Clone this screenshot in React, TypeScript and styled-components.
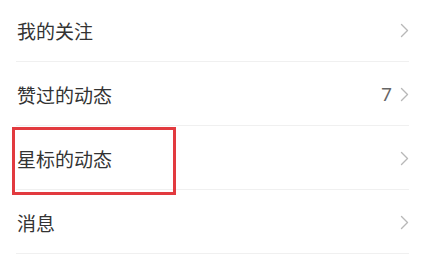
import styled, { createGlobalStyle } from "styled-components";

const GlobalStyle = createGlobalStyle`
  html, body {
    margin: 0;
    padding: 0;
    background: #ffffff;
  }
  body {
    font-family: "Noto Sans CJK SC", "Noto Sans", sans-serif;
    overflow: hidden;
  }
`;

const List = styled.div`
  position: relative;
  margin-top: -2px;
  width: 425px;
  background: #fff;
`;

const Row = styled.div`
  display: flex;
  align-items: center;
  height: 64px;
  margin-left: 16px;
  margin-right: 16px;
  padding-left: 1px;
  padding-top: 2px;
  box-sizing: border-box;
  border-bottom: 1px solid #f0f0f0;
`;

const Label = styled.span`
  flex: 1;
  font-size: 19px;
  color: #333333;
  line-height: 1;
`;

const Count = styled.span`
  font-size: 19px;
  color: #666666;
  margin-right: 8px;
  font-family: "Roboto", "Noto Sans", sans-serif;
  line-height: 1;
`;

const Chevron = styled.svg`
  width: 9px;
  height: 15px;
  flex-shrink: 0;
`;

const Highlight = styled.div`
  position: absolute;
  left: 12px;
  top: 129px;
  width: 164px;
  height: 68px;
  border: 3px solid #e23a3f;
  box-sizing: border-box;
  pointer-events: none;
`;

type Item = { label: string; count?: string };

const items: Item[] = [
  { label: "我的关注" },
  { label: "赞过的动态", count: "7" },
  { label: "星标的动态" },
  { label: "消息" },
];

function Arrow() {
  return (
    <Chevron viewBox="0 0 9 15">
      <polyline
        points="1.5,1.5 7.5,7.5 1.5,13.5"
        fill="none"
        stroke="#b8b8b8"
        strokeWidth="1.4"
        strokeLinecap="round"
        strokeLinejoin="round"
      />
    </Chevron>
  );
}

export default function App() {
  return (
    <>
      <GlobalStyle />
      <List>
        {items.map((item) => (
          <Row key={item.label}>
            <Label>{item.label}</Label>
            {item.count && <Count>{item.count}</Count>}
            <Arrow />
          </Row>
        ))}
        <Highlight />
      </List>
    </>
  );
}
